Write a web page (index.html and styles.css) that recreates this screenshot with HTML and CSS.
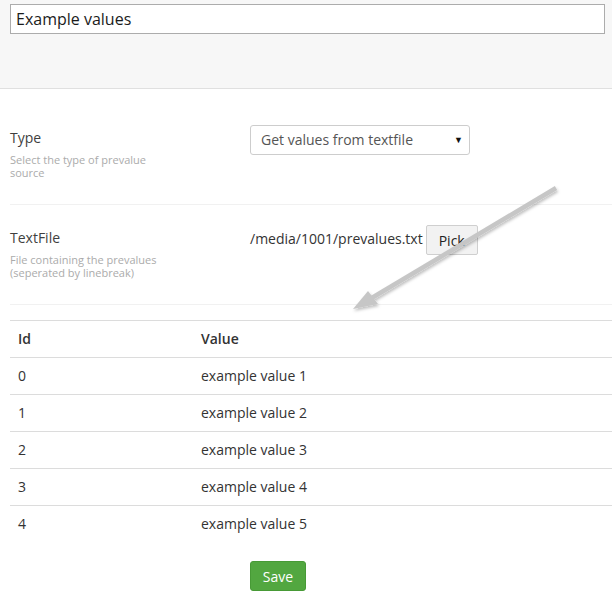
FILE: index.html
```html
<!DOCTYPE html>
<html>
<head>
<meta charset="utf-8">
<link rel="stylesheet" href="styles.css">
</head>
<body>
<div class="page">
  <header class="top">
    <input class="title-input" type="text" value="Example values">
  </header>

  <div class="form-row first">
    <div class="label-col">
      <div class="label">Type</div>
      <div class="desc">Select the type of prevalue<br>source</div>
    </div>
    <div class="control-col">
      <div class="select">
        <span>Get values from textfile</span>
        <span class="caret">&#9660;</span>
      </div>
    </div>
  </div>

  <div class="form-row">
    <div class="label-col">
      <div class="label">TextFile</div>
      <div class="desc">File containing the prevalues<br>(seperated by linebreak)</div>
    </div>
    <div class="control-col file">
      <span class="path">/media/1001/prevalues.txt</span>
      <button class="pick">Pick</button>
    </div>
  </div>

  <table class="values">
    <thead>
      <tr><th class="c-id">Id</th><th>Value</th></tr>
    </thead>
    <tbody>
      <tr><td>0</td><td>example value 1</td></tr>
      <tr><td>1</td><td>example value 2</td></tr>
      <tr><td>2</td><td>example value 3</td></tr>
      <tr><td>3</td><td>example value 4</td></tr>
      <tr><td>4</td><td>example value 5</td></tr>
    </tbody>
  </table>

  <div class="actions">
    <button class="save">Save</button>
  </div>

  <svg class="arrow" width="612" height="614" viewBox="0 0 612 614">
    <defs>
      <filter id="sh" x="-20%" y="-20%" width="140%" height="140%">
        <feDropShadow dx="1" dy="2" stdDeviation="1.5" flood-color="#000" flood-opacity="0.25"/>
      </filter>
    </defs>
    <g filter="url(#sh)">
      <line x1="556" y1="188" x2="370" y2="299" stroke="#c6c6c6" stroke-width="4.5"/>
      <polygon points="353,309 368,291 378,304" fill="#c6c6c6"/>
    </g>
  </svg>
</div>
</body>
</html>
```

FILE: styles.css
```css
* { box-sizing: border-box; }

html, body {
  margin: 0;
  padding: 0;
  background: #fff;
}

body {
  font-family: "Open Sans", "Liberation Sans", sans-serif;
  font-size: 14px;
  line-height: 20px;
  color: #343434;
}

.page {
  position: relative;
  width: 612px;
  height: 614px;
  overflow: hidden;
}

.top {
  height: 89px;
  background: #f7f7f7;
  border-bottom: 1px solid #e0e0e0;
  padding: 4px 8px 0 10px;
}

.title-input {
  display: block;
  width: 595px;
  height: 30px;
  border: 1px solid #acacac;
  background: #fff;
  padding: 0 5px;
  font-family: "Open Sans", "Liberation Sans", sans-serif;
  font-size: 16px;
  color: #1b1b1b;
  outline: none;
}

.form-row {
  display: flex;
  margin-left: 10px;
  padding: 20px 0 25px;
  border-bottom: 1px solid #f1f1f1;
}

.form-row.first {
  margin-top: 16px;
}

.label-col {
  width: 240px;
  flex: none;
}

.label {
  margin-top: 3px;
  font-size: 14px;
  line-height: 20px;
  color: #3f3f3f;
}

.desc {
  margin-top: 5px;
  font-size: 11px;
  line-height: 13px;
  color: #ababab;
}

.control-col {
  display: flex;
  align-items: flex-start;
}

.select {
  width: 220px;
  height: 30px;
  border: 1px solid #cdcdcd;
  border-radius: 3px;
  background: #fff;
  display: flex;
  align-items: center;
  justify-content: space-between;
  padding: 0 6px 0 10px;
  color: #555;
  font-size: 14px;
}

.caret {
  font-size: 9px;
  color: #111;
}

.file {
  gap: 3px;
}

.path {
  margin-top: 4px;
  color: #333;
}

.pick {
  width: 52px;
  height: 30px;
  border: 1px solid #cfcfcf;
  border-radius: 2px;
  background: #f2f2f2;
  font-family: "Open Sans", "Liberation Sans", sans-serif;
  font-size: 14px;
  color: #222;
  padding: 0;
}

.values {
  margin: 15px 0 0 10px;
  width: 602px;
  border-collapse: collapse;
  border-top: 1px solid #dcdcdc;
}

.values th,
.values td {
  text-align: left;
  padding: 8px;
  font-size: 14px;
  line-height: 20px;
  color: #333;
}

.values th {
  font-weight: 600;
}

.values .c-id {
  width: 183px;
}

.values thead tr,
.values tbody tr {
  border-bottom: 1px solid #dcdcdc;
}

.values tbody tr:last-child {
  border-bottom: none;
}

.actions {
  padding: 19px 0 0 250px;
}

.save {
  display: block;
  width: 56px;
  height: 30px;
  border: 1px solid #479a36;
  border-radius: 3px;
  background: #52a740;
  color: #fff;
  font-family: "Open Sans", "Liberation Sans", sans-serif;
  font-size: 14px;
  padding: 0;
}

.arrow {
  position: absolute;
  left: 0;
  top: 0;
  pointer-events: none;
}
```
